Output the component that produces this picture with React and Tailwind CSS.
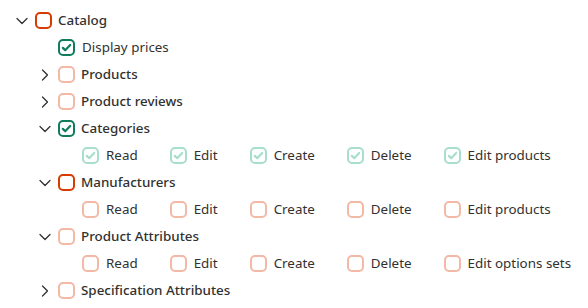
import React from 'react';
import { ChevronDown, ChevronRight } from 'lucide-react';

const tones = {
  red: 'border-[#d83b01]',
  redLight: 'border-[#f3b9a6]',
  green: 'border-[#107c5e] text-[#107c5e]',
  greenLight: 'border-[#a8dfcc] text-[#a8dfcc]',
};

const Box = ({ tone, checked }) => (
  <span
    className={`flex h-[17px] w-[17px] shrink-0 items-center justify-center rounded-[5px] border-2 bg-white ${tones[tone]}`}
  >
    {checked && (
      <svg viewBox="0 0 12 12" className="h-[11px] w-[11px]" fill="none">
        <path d="M2 6.4l2.6 2.5L10 3.3" stroke="currentColor" strokeWidth="2.4" strokeLinecap="round" strokeLinejoin="round" />
      </svg>
    )}
  </span>
);

const Node = ({ level, chevron, tone, checked, label }) => (
  <div className="flex h-[27px] items-center" style={{ paddingLeft: 12 + level * 23 }}>
    <span className="flex w-5 justify-center text-[#323130]">
      {chevron === 'down' && <ChevronDown size={22} strokeWidth={1.5} />}
      {chevron === 'right' && <ChevronRight size={22} strokeWidth={1.5} />}
    </span>
    <span className="ml-[3px]">
      <Box tone={tone} checked={checked} />
    </span>
    <span className="ml-[6px] whitespace-nowrap text-[13.4px] font-medium text-[#323130]">{label}</span>
  </div>
);

const Perms = ({ items, tone, checked }) => (
  <div className="flex h-[27px] items-center pl-[82px]">
    {items.map((item, i) => (
      <div key={item} className={`flex items-center gap-[7px] ${i === 0 ? '' : 'ml-[32px]'}`}>
        <Box tone={tone} checked={checked} />
        <span className="whitespace-nowrap text-[13.4px] text-[#323130]">{item}</span>
      </div>
    ))}
  </div>
);

const crud = ['Read', 'Edit', 'Create', 'Delete'];

export default function App() {
  return (
    <div className="min-h-screen bg-white pt-[7px] font-['Noto_Sans','Open_Sans',sans-serif]">
      <Node level={0} chevron="down" tone="red" label="Catalog" />
      <div className="flex h-[27px] items-center pl-[58px]">
        <Box tone="green" checked />
        <span className="ml-[7px] whitespace-nowrap text-[13.4px] text-[#323130]">Display prices</span>
      </div>
      <Node level={1} chevron="right" tone="redLight" label="Products" />
      <Node level={1} chevron="right" tone="redLight" label="Product reviews" />
      <Node level={1} chevron="down" tone="green" checked label="Categories" />
      <Perms items={[...crud, 'Edit products']} tone="greenLight" checked />
      <Node level={1} chevron="down" tone="red" label="Manufacturers" />
      <Perms items={[...crud, 'Edit products']} tone="redLight" />
      <Node level={1} chevron="down" tone="redLight" label="Product Attributes" />
      <Perms items={[...crud, 'Edit options sets']} tone="redLight" />
      <Node level={1} chevron="right" tone="redLight" label="Specification Attributes" />
    </div>
  );
}
